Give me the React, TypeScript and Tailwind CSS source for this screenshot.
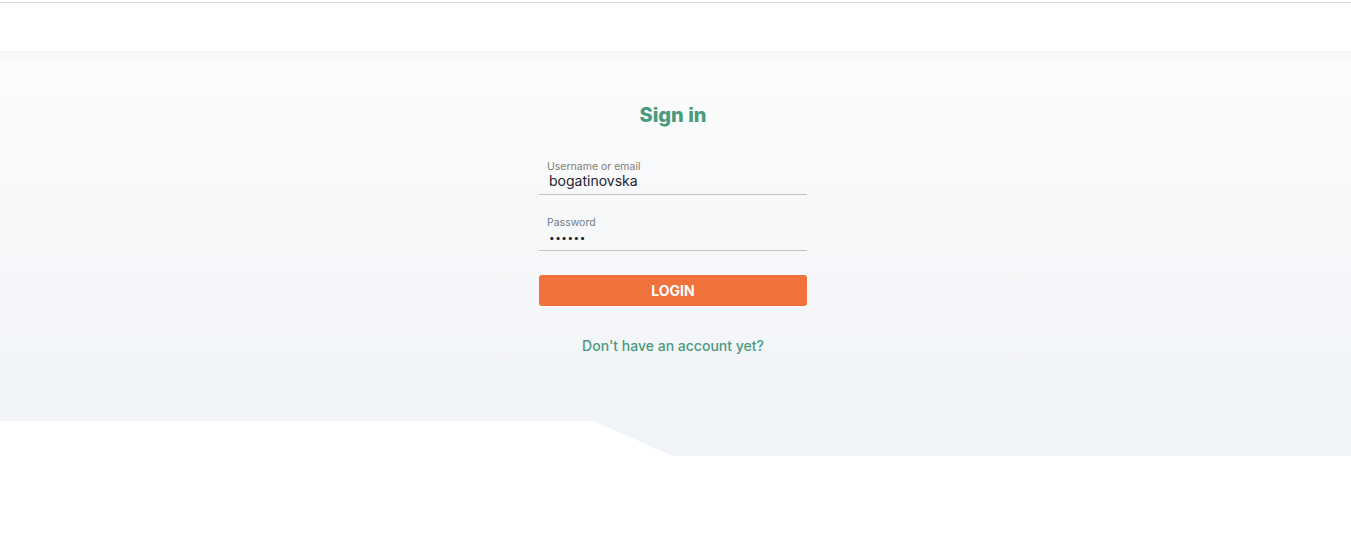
export default function App() {
  return (
    <div className="min-h-[544px] bg-white font-['Inter','Noto_Sans',sans-serif]">
      {/* header */}
      <div className="h-[51px] bg-white pt-[2px]">
        <div className="h-px bg-[#d9d9d9]" />
      </div>

      {/* sign-in band with the cut-off bottom corner */}
      <section className="h-[405px] bg-gradient-to-b from-[#fcfcfc] to-[#f0f3f7] pr-[5px] shadow-[inset_0_12px_14px_-12px_rgba(0,0,0,0.06)] [clip-path:polygon(0_0,100%_0,100%_100%,673px_100%,593px_370px,0_370px)]">
        <div className="mx-auto flex w-[268px] flex-col pt-[50px]">
          <h1 className="text-center text-[20px] font-extrabold leading-[28px] text-[#4a9a80]">
            Sign in
          </h1>

          <div className="mt-[31px] border-b border-[#c2c2c2] pb-[5px]">
            <div className="pl-2 text-[10.5px] leading-[13px] text-[#857d78]">Username or email</div>
            <div className="pl-[10px] text-[14px] leading-[16px] text-[#1f2430]">bogatinovska</div>
          </div>

          <div className="mt-[21px] border-b border-[#c2c2c2] pb-[5px]">
            <div className="pl-2 text-[10.5px] leading-[13px] text-[#6f7d8c]">Password</div>
            <div className="pl-[10px] text-[10px] leading-[16px] tracking-[0.5px] text-[#1f2430]">••••••</div>
          </div>

          <button className="mt-6 h-[31px] rounded-[3px] bg-[#ef713b] text-[14px] font-bold text-white">
            LOGIN
          </button>

          <a className="mt-[30px] text-center text-[14px] font-medium leading-5 text-[#4a9a80]">
            Don't have an account yet?
          </a>
        </div>
      </section>
    </div>
  );
}
